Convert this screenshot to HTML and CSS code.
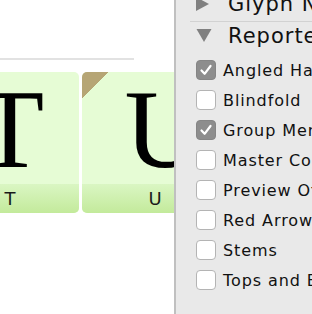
FILE: index.html
```html
<!DOCTYPE html>
<html>
<head>
<meta charset="utf-8">
<link rel="stylesheet" href="styles.css">
</head>
<body>
<div class="app">
  <div class="canvas">
    <div class="rule"></div>
    <div class="tiles">
      <div class="tile">
        <div class="glyph"><span>T</span></div>
        <div class="label">T</div>
      </div>
      <div class="tile marked">
        <div class="glyph"><span style="transform:translateX(10px)">U</span></div>
        <div class="label">U</div>
        <div class="corner"></div>
      </div>
    </div>
  </div>
  <div class="panel">
    <div class="section collapsed">
      <svg class="disc" width="16" height="16" viewBox="0 0 16 16"><polygon points="0,1 13,8 0,15" fill="#808080"/></svg>
      <span class="title">Glyph Names</span>
    </div>
    <div class="sep"></div>
    <div class="section">
      <svg class="disc" width="16" height="16" viewBox="0 0 16 16"><polygon points="0.5,1 15.5,1 8,14" fill="#808080"/></svg>
      <span class="title">Reporters</span>
    </div>
    <ul class="checks">
      <li><span class="box on"><svg width="20" height="20" viewBox="0 0 20 20"><path d="M5.5 10.5 L8.6 13.8 L14.5 6" fill="none" stroke="#fff" stroke-width="2.2" stroke-linecap="round" stroke-linejoin="round"/></svg></span>Angled Handles</li>
      <li><span class="box"></span>Blindfold</li>
      <li><span class="box on"><svg width="20" height="20" viewBox="0 0 20 20"><path d="M5.5 10.5 L8.6 13.8 L14.5 6" fill="none" stroke="#fff" stroke-width="2.2" stroke-linecap="round" stroke-linejoin="round"/></svg></span>Group Members</li>
      <li><span class="box"></span>Master Compatibility</li>
      <li><span class="box"></span>Preview Off</li>
      <li><span class="box"></span>Red Arrows</li>
      <li><span class="box"></span>Stems</li>
      <li><span class="box"></span>Tops and Bottoms</li>
    </ul>
  </div>
</div>
</body>
</html>
```
FILE: styles.css
```css
html, body {
  margin: 0;
  padding: 0;
  width: 312px;
  height: 314px;
  overflow: hidden;
  background: #fff;
}
.app {
  display: flex;
  width: 312px;
  height: 314px;
}
.canvas {
  width: 174px;
  flex: none;
  background: #fff;
  overflow: hidden;
}
.rule {
  width: 134px;
  height: 2px;
  margin-top: 58px;
  background: #e2e2e2;
}
.tiles {
  display: flex;
  gap: 3px;
  margin-top: 12px;
  margin-left: -63px;
}
.tile {
  position: relative;
  width: 142px;
  height: 141px;
  flex: none;
  border-radius: 5px;
  overflow: hidden;
  background: #e6fcd5;
  display: flex;
  flex-direction: column;
}
.glyph {
  height: 112px;
  padding-left: 4px;
  font-family: "Liberation Serif", serif;
  font-size: 112px;
  line-height: 114px;
  text-align: center;
  color: #000;
}
.glyph span {
  display: inline-block;
}
.label {
  height: 29px;
  padding-left: 4px;
  background: linear-gradient(#daf6c3, #c3ea9b);
  font-family: "DejaVu Sans", sans-serif;
  font-size: 18px;
  line-height: 29px;
  text-align: center;
  color: #1a1a1a;
}
.corner {
  position: absolute;
  left: 0;
  top: 0;
  width: 26px;
  height: 26px;
  background: linear-gradient(135deg, #b6a575 50%, transparent 50%);
}
.panel {
  flex: 1;
  background: #e9e9e9;
  border-left: 2px solid #c0c0c0;
  overflow: hidden;
  font-family: "DejaVu Sans", sans-serif;
  color: #111;
}
.section {
  height: 28px;
  display: flex;
  align-items: center;
  padding-left: 20px;
  white-space: nowrap;
}
.section.collapsed {
  margin-top: -10px;
}
.disc {
  flex: none;
  margin-right: 16px;
}
.title {
  font-size: 21px;
  letter-spacing: 1px;
  line-height: 28px;
}
.sep {
  height: 1px;
  margin: 3px 0 0 14px;
  background: #d2d2d2;
}
.checks {
  list-style: none;
  margin: 5px 0 0;
  padding: 0 0 0 20px;
}
.checks li {
  height: 30px;
  display: flex;
  align-items: center;
  gap: 7px;
  font-size: 16px;
  letter-spacing: 0.9px;
  white-space: nowrap;
}
.box {
  flex: none;
  width: 18px;
  height: 18px;
  border: 1px solid #b4b4b4;
  border-radius: 4px;
  background: #fff;
  display: flex;
  align-items: center;
  justify-content: center;
}
.box svg {
  flex: none;
}
.box.on {
  background: #8d8d8d;
  border-color: #858585;
}
```
